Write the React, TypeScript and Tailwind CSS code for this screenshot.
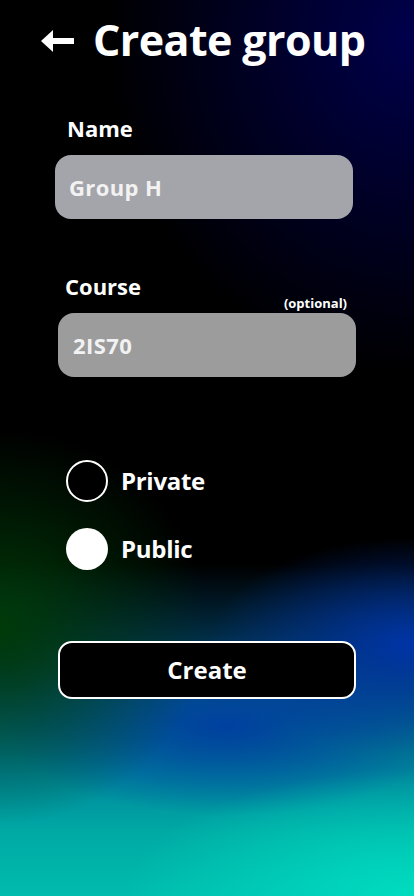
import React, { useState } from 'react';

const bg =
  'bg-[radial-gradient(ellipse_75%_38%_at_100%_4%,#00004c_0%,transparent_100%),radial-gradient(ellipse_70%_14%_at_100%_100%,#00dcc0_0%,transparent_100%),radial-gradient(ellipse_50%_22%_at_0%_70%,#003a08_0%,transparent_100%),radial-gradient(ellipse_50%_12%_at_100%_72%,#0034a8_0%,transparent_100%),radial-gradient(ellipse_55%_10%_at_55%_81%,#0040a0_0%,transparent_100%),linear-gradient(to_bottom,#000_0%,#000_63%,#012c44_71%,#03587a_78%,#00849c_86%,#00aaa4_93%,#00bcae_100%)]';

const App: React.FC = () => {
  const [visibility, setVisibility] = useState<'private' | 'public'>('public');

  return (
    <div className={`w-[414px] h-[896px] overflow-hidden bg-black ${bg} text-white font-['Open_Sans',sans-serif]`}>
      <div className="flex items-center pt-[14px] pl-[41px]">
        <svg width="34" height="22" viewBox="0 0 34 22" className="mr-[18px] mt-[2px]">
          <path d="M0 11 L12 0 L12 22 Z" fill="white" />
          <path d="M8 11 H33" stroke="white" strokeWidth="6" />
        </svg>
        <h1 className="text-[43px] font-bold tracking-[-0.6px] leading-[52px]">Create group</h1>
      </div>

      <div className="mt-[48px] pl-[67px] text-[22px] font-bold leading-[28px]">Name</div>
      <div className="mt-[13px] ml-[55px] w-[298px] h-[64px] rounded-[16px] bg-[#a4a4ab] flex items-center pl-[14px]">
        <span className="text-[22px] font-bold tracking-[0.4px] text-[#f2f2f2]">Group H</span>
      </div>

      <div className="mt-[53px] pl-[65px] pr-[58px] flex justify-between items-end">
        <span className="text-[22px] font-bold leading-[28px]">Course</span>
        <span className="text-[13px] font-bold leading-[14px] mb-[-10px] mr-[9px]">(optional)</span>
      </div>
      <div className="mt-[13px] ml-[58px] w-[298px] h-[64px] rounded-[16px] bg-[#9c9c9c] flex items-center pl-[15px]">
        <span className="text-[22px] font-bold tracking-[0.4px] text-[#f2f2f2]">2IS70</span>
      </div>

      <div className="mt-[83px] ml-[66px] flex flex-col gap-[26px]">
        {(['private', 'public'] as const).map((v) => (
          <button key={v} onClick={() => setVisibility(v)} className="flex items-center gap-[13px]">
            <span
              className={
                visibility === v
                  ? 'w-[42px] h-[42px] rounded-full bg-white'
                  : 'w-[42px] h-[42px] rounded-full border-2 border-white bg-black'
              }
            />
            <span className="text-[24px] font-bold tracking-[-0.3px] leading-[30px]">
              {v === 'private' ? 'Private' : 'Public'}
            </span>
          </button>
        ))}
      </div>

      <button className="mt-[71px] ml-[58px] w-[298px] h-[58px] rounded-[14px] border-2 border-white bg-black text-[24px] font-bold">
        Create
      </button>
    </div>
  );
};

export default App;
